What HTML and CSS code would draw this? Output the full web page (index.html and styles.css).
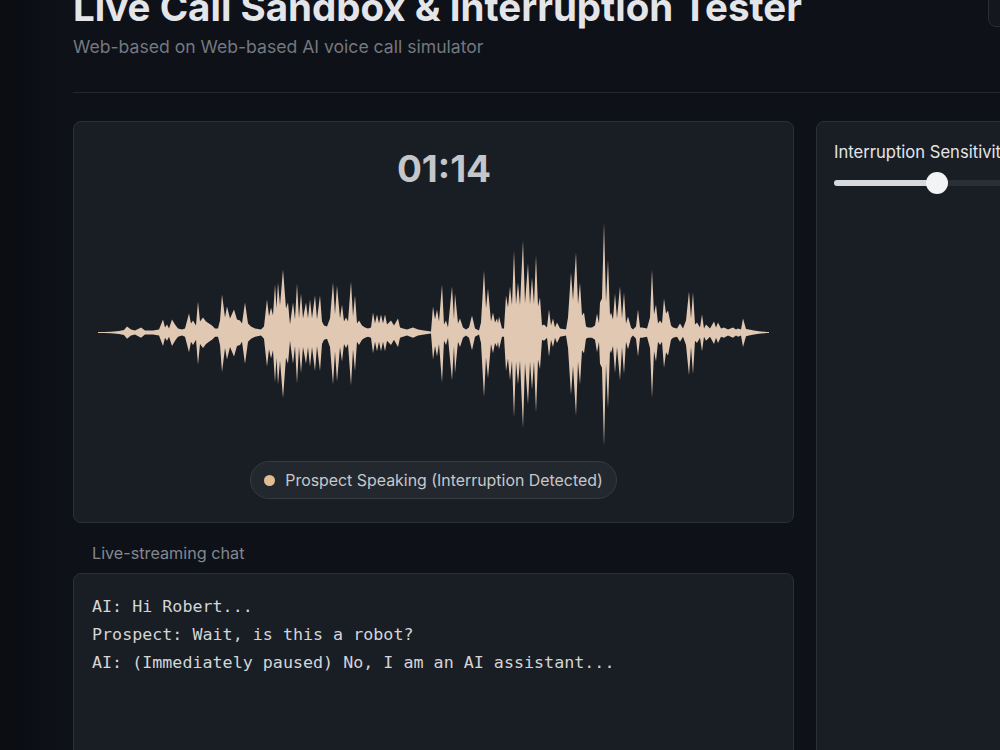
FILE: index.html
```html
<!DOCTYPE html>
<html>
<head>
    <title>Live Call Sandbox</title>
    <link rel="stylesheet" href="styles.css">
</head>
<body>
    <div class="page">
        <header class="page-header">
            <div>
                <h1>Live Call Sandbox &amp; Interruption Tester</h1>
                <p class="subtitle">Web-based on Web-based AI voice call simulator</p>
            </div>
            <div class="header-action"></div>
        </header>

        <div class="layout">
            <div class="main-col">
                <section class="card call-card">
                    <div class="timer">01:14</div>
                    <svg class="waveform" viewBox="97 221 672 222">
                        <defs>
                            <path id="wave-half" d="M97 -.6 L97 .3 110 .8 118 1.5 123 2.5 126 6 130 3 134 2 140 5 144 2 152 2 158 3 162 13 164 5 166 8 168 4 171 13 174 8 177 4 181 3 184 4 188 19 190 9 192 12 195 7 197 31 199 11 202 15 205 11 208 9 211 7 214 4 217 4 219 12 221 38 224 15 226 26 229 14 233 23 236 13 239 12 241 9 244 30 247 9 250 6 254 4 260 3 263 6 266 33 268 16 270 25 272 17 274 48 275.5 24 277 50 279 27 282 63 285 24 287 30 289 8 292 30 294 13 296 49 298 14 300 39 302 14 305 30 307 14 309 33 311 14 314 37 316 13 319 37 321 11 323 7 326 6 329 14 332 50 334 18 336 47 339 14 341 28 343 11 345 15 347 11 350 51 352 16 354 37 356 9 358 12 361 7 364 5 367 4 370 5 372 20 374 9 376 18 378 9 380 18 382 9 384 18 386 8 390 12 393 7 397 14 399 5 402 4 406 3 412 5 417 3 423 2 430 1 432 26 434 13 436 23 438 11 441 48 443 8 445 12 447 5 451 46 453 13 454 39 457 9 459 14 462 5 465 3 468 5 471 17 474 4 478 2 480 10 483 62 485 24 487 44 490 11 492 20 494 10 496 14 497 9 498 16 501 4 503 4 505 37 507 25 509 46 511 27 513 82 515 28 517 50 519 27 522 92 524 29 527 69 529 28 531 55 533 28 535 77 537 26 539 35 541 7 543 8 546 5 548 23 550 7 552 14 554 5 556 10 559 4 565 3 567 15 570 60 572 32 575 80 577 28 579 50 581 17 583 20 585 6 587 5 591 5 594 7 596 19 598 9 599 30 601 34 603 110 605 30 607 73 609 17 610 20 612 13 614 39 616 14 619 46 621 14 623 40 625 9 627 16 630 5 632 3 635 6 637 23 639 5 641 5 646 4 649 15 651 63 653 18 655 28 657 9 659 12 661 9 663 34 665 19 667 22 670 7 672 5 676 4 679 9 682 4 685 12 688 41 690 14 692 40 694 8 696 10 699 5 701 18 703 4 705 8 709 4 713 11 715 5 717 10 720 4 723 5 727 3 732 5 735 3 737 4 740 3 742 14 745 3.5 748 3 753 2 758 1.3 768 .2 768 -.6 Z"/>
                        </defs>
                        <use href="#wave-half" transform="matrix(1 0 0 -1 0 331.5)"/>
                        <use href="#wave-half" transform="matrix(1 0 0 1.04 0 331.5)"/>
                    </svg>
                    <div class="status-pill">
                        <span class="status-dot"></span>
                        Prospect Speaking (Interruption Detected)
                    </div>
                </section>

                <div class="chat-label">Live-streaming chat</div>
                <section class="card chat-card">
                    <div>AI: Hi Robert...</div>
                    <div>Prospect: Wait, is this a robot?</div>
                    <div>AI: (Immediately paused) No, I am an AI assistant...</div>
                </section>
            </div>

            <aside class="card side-panel">
                <div class="slider-label">Interruption Sensitivity</div>
                <div class="slider">
                    <div class="slider-fill" style="width: 39%"></div>
                    <div class="slider-thumb" style="left: 39%"></div>
                </div>
            </aside>
        </div>
    </div>
</body>
</html>
```

FILE: styles.css
```css
html, body {
    height: 750px;
    overflow: hidden;
}

body {
    margin: 0;
    background: linear-gradient(90deg, #0a0c11 0, #0e1118 60px, #0e1118 100%);
    font-family: Inter, "Liberation Sans", sans-serif;
}

.page {
    box-sizing: border-box;
    width: 1116px;
    margin-top: -16px;
    padding-left: 73px;
}

.page-header {
    display: flex;
    justify-content: space-between;
    align-items: flex-start;
    height: 108px;
    border-bottom: 1px solid #24272e;
}

.page-header h1 {
    margin: 0;
    font-size: 38.5px;
    line-height: 46px;
    font-weight: 700;
    color: #e3e5e9;
    white-space: nowrap;
}

.subtitle {
    margin: 5px 0 0;
    font-size: 17.6px;
    line-height: 24px;
    color: #74787f;
    white-space: nowrap;
}

.header-action {
    width: 128px;
    height: 43px;
    box-sizing: border-box;
    background: #14171d;
    border: 1px solid #2a2d34;
    border-radius: 8px;
}

.layout {
    display: flex;
    gap: 22px;
    margin-top: 28px;
}

.main-col {
    flex: 0 0 721px;
}

.card {
    box-sizing: border-box;
    background: #191d24;
    border: 1px solid #2b2f36;
    border-radius: 8px;
}

.call-card {
    height: 402px;
    display: flex;
    flex-direction: column;
    align-items: center;
    padding-top: 24px;
}

.timer {
    padding-left: 21px;
    font-size: 37px;
    line-height: 46px;
    font-weight: 700;
    color: #c3c6ca;
}

.waveform {
    display: block;
    width: 672px;
    height: 222px;
    margin-top: 30px;
    fill: #e1c8b3;
    filter: blur(0.5px);
}

.status-pill {
    display: flex;
    align-items: center;
    gap: 10px;
    box-sizing: border-box;
    height: 38px;
    margin-top: 17px;
    padding: 0 13px;
    background: #23272e;
    border: 1px solid #363a41;
    border-radius: 19px;
    font-size: 15.9px;
    color: #c6c8cc;
}

.status-dot {
    width: 11px;
    height: 11px;
    border-radius: 50%;
    background: #e0bd92;
}

.chat-label {
    margin: 20px 0 10px 19px;
    font-size: 16.2px;
    line-height: 20px;
    color: #84878e;
}

.chat-card {
    height: 300px;
    padding: 18px 18px;
    font-family: "DejaVu Sans Mono", "Liberation Mono", monospace;
    font-size: 16.7px;
    line-height: 28px;
    color: #d3d5d8;
}

.side-panel {
    flex: 1;
    height: 760px;
    padding: 19px 17px;
}

.slider-label {
    font-size: 16.6px;
    line-height: 22px;
    color: #e4e5e8;
    white-space: nowrap;
}

.slider {
    position: relative;
    height: 6px;
    margin-top: 17px;
    background: #2a2e35;
    border-radius: 3px;
}

.slider-fill {
    height: 100%;
    background: #d6d8db;
    border-radius: 3px;
}

.slider-thumb {
    position: absolute;
    top: 50%;
    width: 22px;
    height: 22px;
    background: #f2f3f4;
    border-radius: 50%;
    transform: translate(-50%, -50%);
}
```
